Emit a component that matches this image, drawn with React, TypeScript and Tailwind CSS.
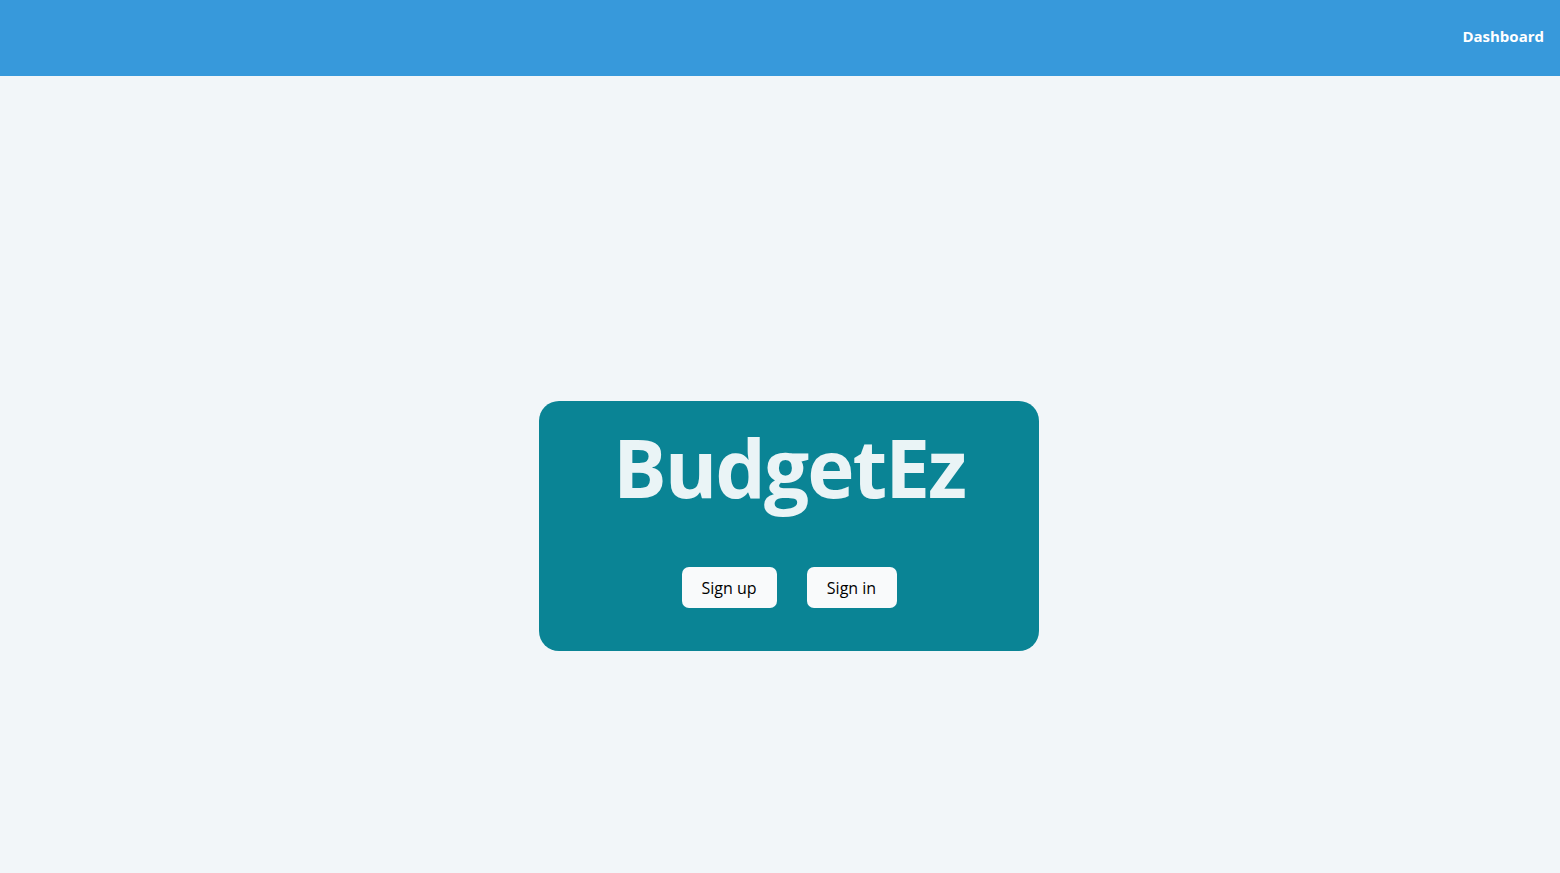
export default function App() {
  return (
    <div className="flex min-h-[873px] flex-col bg-[#f2f6f9] font-['Open_Sans',sans-serif]">
      <header className="flex h-[76px] items-center justify-end bg-[#3799db] px-4 pb-1">
        <a href="#" className="text-[15px] font-bold text-white">
          Dashboard
        </a>
      </header>

      <main className="flex grow justify-center pl-[18px] pt-[325px]">
        <div className="flex h-[250px] w-[500px] flex-col items-center rounded-[20px] bg-[#0a8495]">
          <h1 className="mt-[18px] text-[80px] font-bold leading-[1.2] tracking-[-2px] text-[#eaf4f6]">
            BudgetEz
          </h1>
          <div className="mt-[52px] flex gap-[30px]">
            <button className="h-[41px] w-[95px] rounded-[7px] bg-[#f9fafb] text-[16px] text-black">
              Sign up
            </button>
            <button className="h-[41px] w-[90px] rounded-[7px] bg-[#f9fafb] text-[16px] text-black">
              Sign in
            </button>
          </div>
        </div>
      </main>
    </div>
  );
}
